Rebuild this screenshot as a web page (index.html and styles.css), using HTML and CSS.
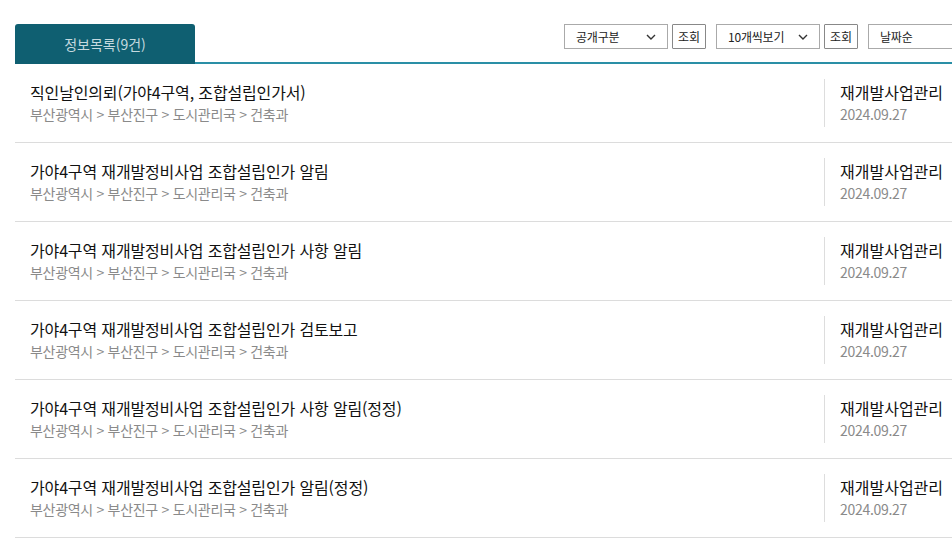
FILE: index.html
```html
<!DOCTYPE html>
<html lang="ko">
<head>
<meta charset="utf-8">
<link rel="stylesheet" href="styles.css">
</head>
<body>
<div class="board">
  <div class="board-head">
    <div class="tab">정보목록(9건)</div>
    <div class="controls">
      <div class="select">공개구분<svg class="chev" viewBox="0 0 10 6" width="10" height="6"><path d="M1 1l4 4 4-4" fill="none" stroke="#333" stroke-width="1.4"/></svg></div>
      <button class="btn">조회</button>
      <div class="select">10개씩보기<svg class="chev" viewBox="0 0 10 6" width="10" height="6"><path d="M1 1l4 4 4-4" fill="none" stroke="#333" stroke-width="1.4"/></svg></div>
      <button class="btn">조회</button>
      <div class="select select-wide">날짜순<svg class="chev" viewBox="0 0 10 6" width="10" height="6"><path d="M1 1l4 4 4-4" fill="none" stroke="#333" stroke-width="1.4"/></svg></div>
      <button class="btn">조회</button>
    </div>
  </div>
  <ul class="list">
    <li class="row"><div class="main"><p class="title">직인날인의뢰(가야4구역, 조합설립인가서)</p><p class="path">부산광역시 &gt; 부산진구 &gt; 도시관리국 &gt; 건축과</p></div><div class="side"><p class="cat">재개발사업관리</p><p class="date">2024.09.27</p></div></li>
    <li class="row"><div class="main"><p class="title">가야4구역 재개발정비사업 조합설립인가 알림</p><p class="path">부산광역시 &gt; 부산진구 &gt; 도시관리국 &gt; 건축과</p></div><div class="side"><p class="cat">재개발사업관리</p><p class="date">2024.09.27</p></div></li>
    <li class="row"><div class="main"><p class="title">가야4구역 재개발정비사업 조합설립인가 사항 알림</p><p class="path">부산광역시 &gt; 부산진구 &gt; 도시관리국 &gt; 건축과</p></div><div class="side"><p class="cat">재개발사업관리</p><p class="date">2024.09.27</p></div></li>
    <li class="row"><div class="main"><p class="title">가야4구역 재개발정비사업 조합설립인가 검토보고</p><p class="path">부산광역시 &gt; 부산진구 &gt; 도시관리국 &gt; 건축과</p></div><div class="side"><p class="cat">재개발사업관리</p><p class="date">2024.09.27</p></div></li>
    <li class="row"><div class="main"><p class="title">가야4구역 재개발정비사업 조합설립인가 사항 알림(정정)</p><p class="path">부산광역시 &gt; 부산진구 &gt; 도시관리국 &gt; 건축과</p></div><div class="side"><p class="cat">재개발사업관리</p><p class="date">2024.09.27</p></div></li>
    <li class="row"><div class="main"><p class="title">가야4구역 재개발정비사업 조합설립인가 알림(정정)</p><p class="path">부산광역시 &gt; 부산진구 &gt; 도시관리국 &gt; 건축과</p></div><div class="side"><p class="cat">재개발사업관리</p><p class="date">2024.09.27</p></div></li>
  </ul>
</div>
</body>
</html>
```
FILE: styles.css
```css
html, body { margin: 0; padding: 0; background: #fff; overflow: hidden; }
body { font-family: "Noto Sans CJK KR", "Noto Sans", sans-serif; color: #111; }
p { margin: 0; }
.board { width: 1015px; padding: 24px 0 0 15px; }
.board-head { display: flex; justify-content: space-between; align-items: flex-start; border-bottom: 2px solid #2a8fa6; height: 38px; }
.tab { width: 180px; height: 40px; box-sizing: border-box; background: #0f5f71; color: #c4d9df; font-size: 14px; display: flex; align-items: center; justify-content: center; border-radius: 3px 3px 0 0; }
.controls { display: flex; align-items: center; }
.select { width: 104px; height: 25px; box-sizing: border-box; border: 1px solid #aaa; font-size: 12px; color: #222; display: flex; align-items: center; justify-content: space-between; padding: 0 11px 0 11px; letter-spacing: -0.2px; }
.select-wide { width: 124px; }
.btn { width: 34px; height: 25px; box-sizing: border-box; border: 1px solid #888; background: #fff; font-family: inherit; font-size: 12px; color: #222; padding: 0; margin: 0 10px 0 4px; border-radius: 1px; }
.controls .btn:last-child { margin-right: 0; }
.list { list-style: none; margin: 0; padding: 0; }
.row { display: flex; align-items: center; height: 79px; box-sizing: border-box; border-bottom: 1px solid #dcdcdc; padding: 0 0 0 15px; }
.main { flex: 1; }
.title { font-size: 16px; line-height: 22px; color: #111; font-weight: 400; letter-spacing: -0.15px; }
.path { font-size: 14px; line-height: 22px; color: #8a8a8a; letter-spacing: -0.3px; }
.side { width: 190px; border-left: 1px solid #ddd; padding-left: 15px; height: 48px; display: flex; flex-direction: column; justify-content: center; }
.cat { font-size: 16px; line-height: 22px; color: #111; font-weight: 400; }
.date { font-size: 14px; line-height: 22px; color: #8a8a8a; letter-spacing: -0.3px; }
```
